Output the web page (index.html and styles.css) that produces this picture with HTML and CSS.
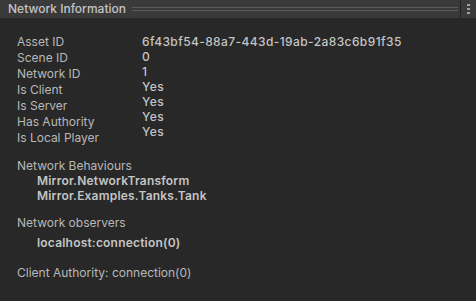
FILE: index.html
```html
<!DOCTYPE html>
<html>
<head>
<meta charset="utf-8">
<link rel="stylesheet" href="styles.css">
</head>
<body>
<div class="panel">
  <div class="header">
    <span class="title">Network Information</span>
    <span class="rule"></span>
    <span class="sep"></span>
    <span class="menu"><i></i><i></i><i></i></span>
  </div>
  <div class="content">
    <div class="info">
      <div class="labels">
        <div>Asset ID</div>
        <div>Scene ID</div>
        <div>Network ID</div>
        <div>Is Client</div>
        <div>Is Server</div>
        <div>Has Authority</div>
        <div>Is Local Player</div>
      </div>
      <div class="values">
        <div>6f43bf54-88a7-443d-19ab-2a83c6b91f35</div>
        <div>0</div>
        <div>1</div>
        <div>Yes</div>
        <div>Yes</div>
        <div>Yes</div>
        <div>Yes</div>
      </div>
    </div>
    <div class="section behaviours">
      <div class="label">Network Behaviours</div>
      <div class="item">Mirror.NetworkTransform</div>
      <div class="item">Mirror.Examples.Tanks.Tank</div>
    </div>
    <div class="section observers">
      <div class="label">Network observers</div>
      <div class="item obs">localhost:connection(0)</div>
    </div>
    <div class="section authority">
      <div class="label">Client Authority: connection(0)</div>
    </div>
  </div>
</div>
</body>
</html>
```
FILE: styles.css
```css
html, body {
  margin: 0;
  padding: 0;
  background: #282828;
}
body {
  width: 476px;
  height: 301px;
  overflow: hidden;
  font-family: Inter, "Noto Sans", sans-serif;
  font-size: 12px;
  color: #b8b8b8;
}
.panel {
  display: flex;
  flex-direction: column;
  height: 301px;
}
.header {
  height: 18px;
  background: #3a3a3a;
  display: flex;
  align-items: flex-start;
  padding-left: 8px;
}
.title {
  font-size: 12px;
  font-weight: 500;
  color: #c4c4c4;
  line-height: 17px;
  white-space: nowrap;
}
.rule {
  flex: 1;
  height: 2px;
  margin-top: 7px;
  margin-left: 6px;
  margin-right: 2px;
  border-top: 1px solid #5c5c5c;
  border-bottom: 1px solid #5c5c5c;
}
.sep {
  width: 1px;
  align-self: stretch;
  background: #242424;
}
.menu {
  width: 9px;
  display: flex;
  flex-direction: column;
  gap: 2px;
  padding-left: 6px;
  padding-top: 4px;
}
.menu i {
  display: block;
  width: 3px;
  height: 2px;
  background: #a0a0a0;
}
.content {
  padding: 16px 0 0 17px;
}
.info {
  display: flex;
}
.labels {
  width: 125px;
  display: flex;
  flex-direction: column;
}
.labels div {
  line-height: 16px;
  height: 16px;
}
.values {
  display: flex;
  flex-direction: column;
  letter-spacing: 0.4px;
  font-weight: 500;
  color: #c4c4c4;
}
.values div {
  line-height: 15px;
  height: 15px;
}
.section .label {
  line-height: 15px;
}
.section .item {
  padding-left: 20px;
  line-height: 15px;
  font-weight: 600;
  letter-spacing: 0.2px;
  color: #c4c4c4;
}
.behaviours {
  margin-top: 12px;
}
.observers {
  margin-top: 12px;
}
.observers .label {
  margin-bottom: 5px;
}
.authority {
  margin-top: 15px;
}
```
